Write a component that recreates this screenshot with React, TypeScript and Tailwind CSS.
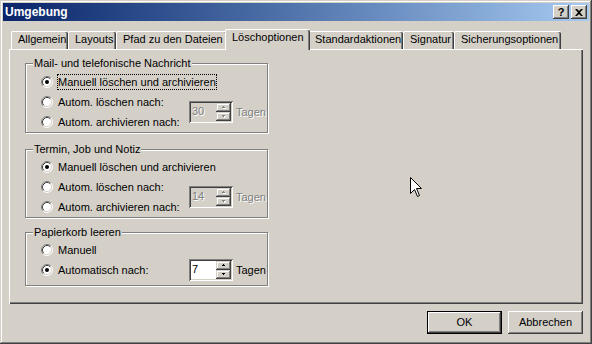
import React from 'react';

const RAISED =
  'shadow-[inset_-1px_-1px_#404040,inset_1px_1px_#fff,inset_-2px_-2px_#808080,inset_2px_2px_#d4d0c8]';
const SPIN_RAISED =
  'shadow-[inset_-1px_-1px_#404040,inset_1px_1px_#d4d0c8,inset_-2px_-2px_#808080,inset_2px_2px_#fff]';
const DISABLED_TEXT = 'text-[#808080] [text-shadow:1px_1px_0_#fff]';

const Radio: React.FC<{ checked?: boolean }> = ({ checked }) => (
  <svg width="12" height="12" viewBox="0 0 12 12" className="shrink-0">
    <circle cx="6" cy="6" r="5" fill="#fff" />
    <path d="M2.11 9.89A5.5 5.5 0 0 1 9.89 2.11" stroke="#808080" fill="none" />
    <path d="M9.89 2.11A5.5 5.5 0 0 1 2.11 9.89" stroke="#fff" fill="none" />
    <path d="M2.82 9.18A4.5 4.5 0 0 1 9.18 2.82" stroke="#404040" fill="none" />
    <path d="M9.18 2.82A4.5 4.5 0 0 1 2.82 9.18" stroke="#d4d0c8" fill="none" />
    {checked && <circle cx="6" cy="6" r="2" fill="#000" />}
  </svg>
);

const RadioRow: React.FC<{ label: string; checked?: boolean; focused?: boolean }> = ({ label, checked, focused }) => (
  <div className="flex items-center h-[20px] gap-[4px]">
    <Radio checked={checked} />
    <span
      className={`border px-0 leading-[14px] whitespace-nowrap ${
        focused ? 'border-dotted border-black' : 'border-transparent'
      }`}
    >
      {label}
    </span>
  </div>
);

const Arrow: React.FC<{ up?: boolean; disabled?: boolean }> = ({ up, disabled }) => {
  const fill = disabled ? '#808080' : '#000';
  const shape = up ? (
    <>
      <rect x="1" y="0" width="1" height="1" />
      <rect x="0" y="1" width="3" height="1" />
    </>
  ) : (
    <>
      <rect x="0" y="0" width="3" height="1" />
      <rect x="1" y="1" width="1" height="1" />
    </>
  );
  return (
    <svg width="4" height="3" viewBox="0 0 4 3">
      {disabled && (
        <g fill="#fff" transform="translate(1 1)">
          {shape}
        </g>
      )}
      <g fill={fill}>{shape}</g>
    </svg>
  );
};

const Spinner: React.FC<{ value: string; disabled?: boolean }> = ({ value, disabled }) => (
  <div
    className={`flex w-[44px] h-[22px] p-[2px] shadow-[inset_1px_1px_#808080,inset_-1px_-1px_#fff,inset_2px_2px_#404040,inset_-2px_-2px_#d4d0c8] ${
      disabled ? 'bg-[#d4d0c8]' : 'bg-white'
    }`}
  >
    <div className={`flex-1 pl-[1px] leading-[16px] ${disabled ? DISABLED_TEXT : 'text-black'}`}>{value}</div>
    <div className="flex flex-col w-[15px]">
      <div className={`flex-1 flex items-center justify-center bg-[#d4d0c8] ${SPIN_RAISED}`}>
        <Arrow up disabled={disabled} />
      </div>
      <div className={`flex-1 flex items-center justify-center bg-[#d4d0c8] ${SPIN_RAISED}`}>
        <Arrow disabled={disabled} />
      </div>
    </div>
  </div>
);

const Group: React.FC<{ title: string; className?: string; children: React.ReactNode }> = ({
  title,
  className,
  children,
}) => (
  <div
    className={`relative w-[243px] border border-[#808080] shadow-[inset_1px_1px_#fff,1px_1px_#fff] pl-[15px] ${className ?? ''}`}
  >
    <span className="absolute -top-[8px] left-[7px] px-[1px] bg-[#d4d0c8] leading-[14px] whitespace-nowrap">
      {title}
    </span>
    {children}
  </div>
);

const tabs = [
  { label: 'Allgemein', w: 'w-[57px]' },
  { label: 'Layouts', w: 'w-[48px]' },
  { label: 'Pfad zu den Dateien', w: 'w-[111px]' },
  { label: 'Löschoptionen', w: 'w-[85px]', active: true },
  { label: 'Standardaktionen', w: 'w-[95px]' },
  { label: 'Signatur', w: 'w-[51px]' },
  { label: 'Sicherungsoptionen', w: 'w-[107px]' },
];

const Cursor = () => (
  <svg width="13" height="21" viewBox="0 0 13 21" className="absolute left-[410px] top-[177px]">
    <path
      d="M0.5 0.5 L0.5 16.5 L4.5 12.5 L7.5 19.5 L9.5 18.5 L6.5 11.5 L11.5 11.5 Z"
      fill="#fff"
      stroke="#000"
      strokeLinejoin="miter"
    />
  </svg>
);

export default function App() {
  return (
    <div
      className={`relative w-[592px] h-[344px] bg-[#d4d0c8] p-[3px] flex flex-col text-[11px] text-black font-['Liberation_Sans',Arial,sans-serif] shadow-[inset_-1px_-1px_#404040,inset_1px_1px_#d4d0c8,inset_-2px_-2px_#808080,inset_2px_2px_#fff]`}
    >
      {/* title bar */}
      <div className="h-[18px] flex items-center justify-between pl-[2px] pr-[2px] bg-gradient-to-r from-[#0a246a] to-[#a6caf0]">
        <span className="text-white font-bold text-[12px] leading-none">Umgebung</span>
        <div className="flex gap-[2px]">
          <div className={`w-[16px] h-[14px] bg-[#d4d0c8] flex items-center justify-center ${RAISED}`}>
            <span className="font-bold text-[11px] leading-none pt-[1px]">?</span>
          </div>
          <div className={`w-[16px] h-[14px] bg-[#d4d0c8] flex items-center justify-center ${RAISED}`}>
            <svg width="8" height="7" viewBox="0 0 8 7">
              <path d="M0 0h2l2 2 2-2h2L5 3.5 8 7H6L4 5 2 7H0l3-3.5z" fill="#000" />
            </svg>
          </div>
        </div>
      </div>

      <div className="flex-1 flex flex-col px-[6px] pt-[8px]">
        {/* tabs */}
        <div className="flex items-end h-[20px] pl-[2px]">
          {tabs.map((t) =>
            t.active ? (
              <div
                key={t.label}
                className={`${t.w} relative z-10 -mx-[2px] -mb-[1px] h-[21px] bg-[#d4d0c8] border-t border-l border-white rounded-tl-[2px] rounded-tr-[2px] shadow-[inset_-1px_0_#404040,inset_-2px_0_#808080] pl-[6px] leading-[15px] whitespace-nowrap`}
              >
                {t.label}
              </div>
            ) : (
              <div
                key={t.label}
                className={`${t.w} h-[18px] border-t border-l border-white rounded-tl-[2px] rounded-tr-[2px] shadow-[inset_-1px_0_#404040,inset_-2px_0_#808080] pl-[6px] leading-[15px] whitespace-nowrap`}
              >
                {t.label}
              </div>
            )
          )}
        </div>

        {/* panel */}
        <div className="h-[255px] border-t border-l border-white shadow-[inset_-1px_-1px_#404040,inset_-2px_-2px_#808080] pl-[15px] pt-[13px]">
          <Group title="Mail- und telefonische Nachricht" className="pt-[8px]">
            <RadioRow label="Manuell löschen und archivieren" checked focused />
            <div className="flex items-center">
              <div className="w-[148px]">
                <RadioRow label="Autom. löschen nach:" />
                <RadioRow label="Autom. archivieren nach:" />
              </div>
              <Spinner value="30" disabled />
              <span className={`ml-[3px] ${DISABLED_TEXT}`}>Tagen</span>
            </div>
          </Group>

          <Group title="Termin, Job und Notiz" className="mt-[16px] pt-[7px]">
            <RadioRow label="Manuell löschen und archivieren" checked />
            <div className="flex items-center">
              <div className="w-[148px]">
                <RadioRow label="Autom. löschen nach:" />
                <RadioRow label="Autom. archivieren nach:" />
              </div>
              <Spinner value="14" disabled />
              <span className={`ml-[3px] ${DISABLED_TEXT}`}>Tagen</span>
            </div>
          </Group>

          <Group title="Papierkorb leeren" className="mt-[14px] pt-[7px] pb-[5px]">
            <RadioRow label="Manuell" />
            <div className="flex items-center h-[20px]">
              <div className="w-[148px]">
                <RadioRow label="Automatisch nach:" checked />
              </div>
              <Spinner value="7" />
              <span className="ml-[3px]">Tagen</span>
            </div>
          </Group>
        </div>

        {/* buttons */}
        <div className="flex justify-end gap-[6px] mt-[7px]">
          <div className="w-[75px] h-[23px] border border-black">
            <div className={`w-full h-full flex items-center justify-center ${RAISED}`}>OK</div>
          </div>
          <div className={`w-[75px] h-[23px] flex items-center justify-center ${RAISED}`}>Abbrechen</div>
        </div>
      </div>

      <Cursor />
    </div>
  );
}
